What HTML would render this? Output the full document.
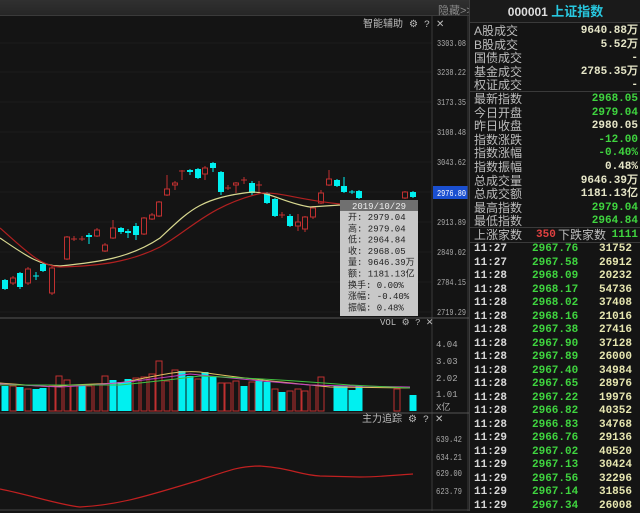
<!DOCTYPE html>
<html><head><meta charset="utf-8"><style>
*{margin:0;padding:0;box-sizing:border-box}
body{width:640px;height:511px;background:#141414;overflow:hidden;position:relative;font-family:"Liberation Sans","Noto Sans CJK SC",sans-serif;}
#top{position:absolute;left:0;top:0;width:469px;height:16px;background:linear-gradient(#303030,#262626);border-bottom:1px solid #3a3a3a}
.t{position:absolute;white-space:nowrap}
#rp{position:absolute;left:469px;top:0;width:171px;height:511px;border-left:1px solid #3c3c3c;background:#141414}
.row{position:absolute;left:4px;width:164px;height:14px;font-size:12px;line-height:14px;color:#bdbdbd}
.row b{position:absolute;right:0;font-weight:bold;font-family:"Liberation Mono",monospace;font-size:11px}
.y{color:#e6e6c8}.g{color:#3fd43f}
.tk{position:absolute;left:4px;width:164px;height:13.5px;font:bold 11px/13px "Liberation Mono",monospace;color:#d8d8d8}
.tk i{font-style:normal;position:absolute;left:28px;color:#3fd43f}
.tk u{text-decoration:none;position:absolute;right:6px;color:#e6e6b0}
.sep{position:absolute;left:0;width:171px;border-top:1px solid #3a3a3a}
</style></head><body>
<div id="top"></div>
<div class="t" style="left:438px;top:2px;font-size:11px;color:#888">隐藏&gt;&gt;</div>
<svg id="s" width="469" height="511" style="position:absolute;left:0;top:0"></svg>
<div id="rp">
<div style="position:absolute;left:0;top:0;width:171px;height:23px;background:#1a1a1a;border-bottom:1px solid #3a3a3a;font:bold 12px/23px 'Liberation Sans','Noto Sans CJK SC',sans-serif;color:#ddd;text-align:center">000001 <span style="color:#28c8e0;font-size:13px">上证指数</span></div>
<div id="rows"></div>
</div>
<script>
var s=document.getElementById('s'),h='';
function L(x1,y1,x2,y2,c,w){h+='<line x1="'+x1+'" y1="'+y1+'" x2="'+x2+'" y2="'+y2+'" stroke="'+c+'" stroke-width="'+(w||1)+'"/>';}
function T(x,y,t,c,sz,a,tl){h+='<text x="'+x+'" y="'+y+'" fill="'+c+'" font-size="'+(sz||9)+'" font-family="Liberation Mono,Noto Sans CJK SC,monospace"'+(a?' text-anchor="'+a+'"':'')+(tl?' textLength="'+tl+'" lengthAdjust="spacingAndGlyphs"':'')+'>'+t+'</text>';}
var gy=[43,72,102,132,162,192,222,252,282,312],lab=['3303.08','3238.22','3173.35','3108.48','3043.62','2976.80','2913.89','2849.02','2784.15','2719.29'];
gy.forEach(function(y,i){L(0,y,432,y,'#1c1c1c');if(i!=5)T(437,y+3,lab[i],'#aaa',9,0,29);});
h+='<rect x="433" y="186" width="35" height="13" fill="#1a4fd0"/>';T(437,196,'2976.80','#fff',9,0,29);
L(432,16,432,511,'#3a3a3a');L(468,16,468,511,'#3a3a3a');L(0,318,469,318,'#555');L(0,413,469,413,'#555');L(0,510,469,510,'#444');
T(363,27,'智能辅助 ⚙ ? ✕','#bbb',10);
var C=[[5,280,289,279,290,0],[13,278,283,276,285,1],[20,273,287,272,289,0],[28,269,283,267,285,1],[36,276,276,272,280,0],[43,264,271,262,272,0],[52,268,293,266,295,1],[67,237,259,236,260,1],[74,239,239,236,241,1],[82,239,239,236,241,1],[89,235,237,233,244,0],[97,230,236,228,237,1],[105,245,251,243,252,1],[113,228,238,220,239,1],[121,228,232,227,234,0],[128,231,233,229,238,0],[136,226,235,223,240,0],[144,218,234,217,235,1],[152,215,219,213,220,1],[159,202,216,201,217,1],[167,189,195,175,196,1],[175,183,185,181,190,1],[182,171,171,170,180,1],[190,170,172,169,175,0],[198,169,178,168,179,0],[205,168,174,166,180,1],[213,163,168,162,172,0],[221,172,192,171,195,0],[228,188,188,185,190,1],[236,183,185,182,193,1],[244,180,180,177,184,1],[252,183,193,181,196,0],[259,185,185,181,193,1],[267,193,203,192,204,0],[275,199,216,198,217,0],[282,215,215,212,218,1],[290,216,226,214,227,0],[298,222,226,214,231,1],[305,217,229,216,232,1],[313,208,217,206,219,1],[321,193,203,190,204,1],[329,179,185,170,186,1],[337,180,186,179,187,0],[344,186,192,177,193,0],[352,192,192,190,194,0],[359,191,198,190,199,0],[405,192,198,191,199,1],[413,192,197,191,198,0]];
C.forEach(function(c){var x=c[0],t=Math.min(c[1],c[2]),b=Math.max(c[1],c[2]),col=c[5]?'#c03030':'#00f0f0';
L(x,c[3],x,c[4],col);if(b-t<1){L(x-3,t,x+3,t,col);}else if(c[5])h+='<rect x="'+(x-2.5)+'" y="'+t+'" width="5" height="'+(b-t)+'" fill="#141414" stroke="'+col+'"/>';else h+='<rect x="'+(x-3)+'" y="'+t+'" width="6" height="'+(b-t)+'" fill="'+col+'"/>';});
h+='<path d="M0,238 C25,255 40,266 60,266 C100,262 130,258 160,238 C190,210 200,198 252,192 C270,192 285,203 310,207 L340,205" fill="none" stroke="#d8d890" stroke-width="1.2"/>';
h+='<path d="M0,228 C25,250 40,266 60,267 C100,266 130,262 160,247 C190,230 210,205 262,193 C280,192 300,200 340,204" fill="none" stroke="#b02020" stroke-width="1.2"/>';
h+='<rect x="340" y="200" width="78" height="116" fill="#c8c8c8"/><rect x="340" y="200" width="78" height="11" fill="#707070"/>';
T(379,209,'2019/10/29','#eee',9,'middle');
['开: 2979.04','高: 2979.04','低: 2964.84','收: 2968.05','量: 9646.39万','额: 1181.13亿','换手: 0.00%','涨幅: -0.40%','振幅: 0.48%'].forEach(function(t,i){T(348,220+i*11.3,t,'#222',9);});
T(380,325,'VOL ⚙ ? ✕','#bbb',9);
[['4.04',347],['3.03',364],['2.02',381],['1.01',397],['X亿',410]].forEach(function(a){T(436,a[1],a[0],'#aaa',9);});
var V=[386,386,387,389,389,388,386,376,380,386,385,386,384,376,380,382,379,378,377,374,361,381,370,371,376,379,372,376,383,383,381,386,382,380,382,389,392,391,389,391,385,377,386,386,390,386,389,395];
var up=[0,1,0,1,0,0,1,1,1,1,0,1,1,1,0,0,0,1,1,1,1,1,1,0,0,1,0,0,1,1,1,0,1,0,0,1,0,1,1,1,1,1,0,0,0,0,1,0];
var VX=[5,13,20,28,36,43,52,59,67,74,82,89,97,105,113,121,128,136,144,152,159,167,175,182,190,198,205,213,221,228,236,244,252,259,267,275,282,290,298,305,313,321,337,344,352,359,397,413];
VX.forEach(function(x,i){var t=V[i],col=up[i]?'#c03030':'#00f0f0';if(up[i])h+='<rect x="'+(x-3)+'" y="'+t+'" width="6" height="'+(411-t)+'" fill="none" stroke="'+col+'"/>';else h+='<rect x="'+(x-3.5)+'" y="'+t+'" width="7" height="'+(411-t)+'" fill="'+col+'"/>';});
h+='<path d="M0,383 C40,386 50,388 70,385 L120,383 C160,375 180,370 200,372 C240,378 280,382 330,387 L410,388" fill="none" stroke="#e0c060"/>';
h+='<path d="M0,384 L60,387 C120,384 160,378 190,374 C230,378 270,382 310,385 L350,386 L410,387" fill="none" stroke="#c040c0"/>';
h+='<path d="M0,385 L120,385 C150,382 170,380 200,376 C250,378 300,381 350,385 L410,388" fill="none" stroke="#40c040"/>';
T(362,422,'主力追踪 ⚙ ? ✕','#bbb',10);
[['639.42',442],['634.21',460],['629.00',476],['623.79',494]].forEach(function(a){T(436,a[1],a[0],'#aaa',9,0,26);});
h+='<path d="M0,489 C30,495 60,505 80,507 C120,505 150,495 200,480 C230,470 240,466 260,466 C290,468 300,475 320,476 L360,477 C380,477 395,475 413,474" fill="none" stroke="#c02020" stroke-width="1.2"/>';
s.innerHTML=h;
var R=[['A股成交','9640.88万','y'],['B股成交','5.52万','y'],['国债成交','-','y'],['基金成交','2785.35万','y'],['权证成交','-','y'],['最新指数','2968.05','g'],['今日开盘','2979.04','g'],['昨日收盘','2980.05','y'],['指数涨跌','-12.00','g'],['指数涨幅','-0.40%','g'],['指数振幅','0.48%','y'],['总成交量','9646.39万','y'],['总成交额','1181.13亿','y'],['最高指数','2979.04','g'],['最低指数','2964.84','g']];
var o='';R.forEach(function(r,i){o+='<div class="row" style="top:'+(24+i*13.6)+'px">'+r[0]+'<b class="'+r[2]+'">'+r[1]+'</b></div>';});
o+='<div class="sep" style="top:91px"></div><div class="sep" style="top:227px"></div><div class="sep" style="top:242px"></div>';
o+='<div class="row" style="top:228px">上涨家数<span style="position:absolute;left:62px;color:#e04040;font:bold 11px/14px Liberation Mono,monospace">350</span><span style="position:absolute;left:84px">下跌家数</span><b class="g">1111</b></div>';
var K=[['11:27','2967.76','31752'],['11:27','2967.58','26912'],['11:28','2968.09','20232'],['11:28','2968.17','54736'],['11:28','2968.02','37408'],['11:28','2968.16','21016'],['11:28','2967.38','27416'],['11:28','2967.90','37128'],['11:28','2967.89','26000'],['11:28','2967.40','34984'],['11:28','2967.65','28976'],['11:28','2967.22','19976'],['11:28','2966.82','40352'],['11:28','2966.83','34768'],['11:29','2966.76','29136'],['11:29','2967.02','40520'],['11:29','2967.13','30424'],['11:29','2967.56','32296'],['11:29','2967.14','31856'],['11:29','2967.34','26008']];
K.forEach(function(k,i){o+='<div class="tk" style="top:'+(243+i*13.5)+'px">'+k[0]+'<i style="left:58px">'+k[1]+'</i><u>'+k[2]+'</u></div>';});
document.getElementById('rows').innerHTML=o;
</script>
</body></html>
